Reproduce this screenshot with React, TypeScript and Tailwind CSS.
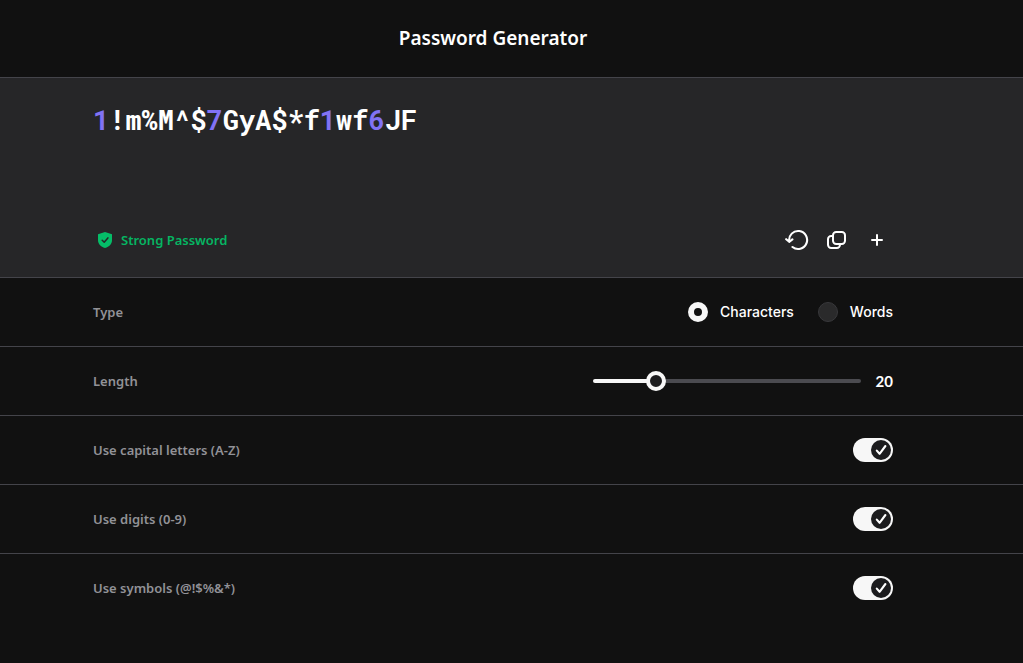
import React, { useState } from 'react';

const PASSWORD = '1!m%M^$7GyA$*f1wf6JF';
const MIN_LENGTH = 8;
const MAX_LENGTH = 64;

function Row({ children, last = false }: { children: React.ReactNode; last?: boolean }) {
  return (
    <div className={last ? '' : 'border-b border-[#44444a]'}>
      <div className="pl-[93px] pr-[130px]">
        <div className="mx-auto flex h-[68px] max-w-[800px] items-center justify-between">{children}</div>
      </div>
    </div>
  );
}

function Toggle({ id, label, last }: { id: string; label: string; last?: boolean }) {
  const [checked, setChecked] = useState(true);

  return (
    <Row last={last}>
      <label htmlFor={id}>{label}</label>
      <span className="relative flex">
        <input
          id={id}
          type="checkbox"
          role="switch"
          checked={checked}
          onChange={(e) => setChecked(e.target.checked)}
          className="peer h-6 w-10 cursor-pointer appearance-none rounded-full bg-[#44444a] checked:bg-[#f7f7f7]"
        />
        <svg
          viewBox="0 0 20 20"
          className="pointer-events-none absolute top-0.5 left-0.5 h-5 w-5 peer-checked:left-[18px]"
          aria-hidden="true"
        >
          <circle cx="10" cy="10" r="10" fill="#1c1c1e" />
          {checked && (
            <path d="M5.8 10.6l2.8 3.2L14.4 6" fill="none" stroke="#fff" strokeWidth="2.1" strokeLinecap="round" strokeLinejoin="round" />
          )}
        </svg>
      </span>
    </Row>
  );
}

export default function App() {
  const [type, setType] = useState('characters');
  const [length, setLength] = useState(20);

  const progress = (length - MIN_LENGTH) / (MAX_LENGTH - MIN_LENGTH);
  const radioClass =
    'h-5 w-5 cursor-pointer appearance-none rounded-full border border-[#38383b] bg-[#2a2a2b] checked:border-[6px] checked:border-[#f7f7f7] checked:bg-[#111111]';
  const iconButton = 'flex h-8 w-8 cursor-pointer items-center justify-center rounded-md hover:bg-white/10';

  return (
    <main className="min-h-screen bg-[#111111] font-['Noto_Sans',sans-serif] text-[13px] leading-5 font-semibold text-[#929297]">
      {/* Header */}
      <header className="border-b border-[#44444a] pl-[93px] pr-[130px]">
        <h1 className="flex h-[77px] items-center justify-center pb-0.5 text-[19px] leading-6 font-semibold text-white">
          Password Generator
        </h1>
      </header>

      {/* Generated password */}
      <section className="border-b border-[#44444a] bg-[#262628] pl-[93px] pr-[130px]">
        <div className="mx-auto flex min-h-[199px] max-w-[800px] flex-col justify-between pt-6 pb-[21px]">
          <output className="block font-['Roboto_Mono','DejaVu_Sans_Mono',monospace] text-[27px] leading-9 font-bold break-all text-white">
            {PASSWORD.split(/(\d)/).map((part, i) => (
              <span key={i} className={/\d/.test(part) ? 'text-[#8172f5]' : ''}>
                {part}
              </span>
            ))}
          </output>

          <div className="flex items-center justify-between">
            <p className="flex items-center gap-2 pl-1 text-[#05b562]">
              <svg viewBox="0 0 16 16" className="h-4 w-4" aria-hidden="true">
                <path d="M8 0 15 2.2V8c0 4-2.7 6.6-7 8-4.3-1.4-7-4-7-8V2.2Z" fill="#05bd68" />
                <path d="M5.2 8.3l2 2 3.7-4.4" fill="none" stroke="#262628" strokeWidth="1.5" strokeLinecap="round" strokeLinejoin="round" />
              </svg>
              Strong Password
            </p>

            <div className="flex gap-2 text-white">
              <button type="button" className={iconButton} aria-label="Generate again">
                <svg viewBox="0 0 24 24" className="h-6 w-6" fill="none" stroke="currentColor" strokeWidth="2.1" strokeLinecap="round" strokeLinejoin="round">
                  <path d="M4.2 13.2A9 9 0 1 1 7.5 19" />
                  <path d="M1.2 11.2l3 2.6 3.2-2.4" />
                </svg>
              </button>
              <button type="button" className={iconButton} aria-label="Copy password">
                <svg viewBox="0 0 24 24" className="h-6 w-6" fill="none" stroke="currentColor" strokeWidth="2" strokeLinecap="round" strokeLinejoin="round">
                  <rect x="8" y="4" width="12" height="12" rx="3.2" />
                  <path d="M8 8H6.2A3.2 3.2 0 0 0 3 11.2v5.6A3.2 3.2 0 0 0 6.200 20h5.600A3.200 3.200 0 0 0 15 16.800V16" />
                </svg>
              </button>
              <button type="button" className={iconButton} aria-label="Save password">
                <svg viewBox="0 0 24 24" className="h-6 w-6" fill="none" stroke="currentColor" strokeWidth="2" strokeLinecap="round">
                  <path d="M12 7v10M7 12h10" />
                </svg>
              </button>
            </div>
          </div>
        </div>
      </section>

      {/* Options */}
      <Row>
        <span id="type-label">Type</span>
        <div role="radiogroup" aria-labelledby="type-label" className="flex gap-6 font-['Inter',sans-serif] text-sm font-medium text-white">
          <label className="flex cursor-pointer items-center gap-3">
            <input type="radio" name="type" checked={type === 'characters'} onChange={() => setType('characters')} className={radioClass} />
            Characters
          </label>
          <label className="flex cursor-pointer items-center gap-3">
            <input type="radio" name="type" checked={type === 'words'} onChange={() => setType('words')} className={radioClass} />
            Words
          </label>
        </div>
      </Row>

      <Row>
        <label htmlFor="length">Length</label>
        <div className="flex items-center gap-3.5">
          <input
            id="length"
            type="range"
            min={MIN_LENGTH}
            max={MAX_LENGTH}
            value={length}
            onChange={(e) => setLength(Number(e.target.value))}
            className="h-1 w-[268px] cursor-pointer appearance-none rounded-full [&::-webkit-slider-thumb]:h-5 [&::-webkit-slider-thumb]:w-5 [&::-webkit-slider-thumb]:appearance-none [&::-webkit-slider-thumb]:rounded-full [&::-webkit-slider-thumb]:border-4 [&::-webkit-slider-thumb]:border-solid [&::-webkit-slider-thumb]:border-[#f7f7f7] [&::-webkit-slider-thumb]:bg-[#1c1c1e]"
            style={{ background: `linear-gradient(to right, #f7f7f7 ${progress * 100}%, #4b4b50 ${progress * 100}%)` }}
          />
          <output htmlFor="length" className="w-[18px] text-right font-['Lato',sans-serif] text-[15px] font-bold text-white">
            {length}
          </output>
        </div>
      </Row>

      <Toggle id="capitals" label="Use capital letters (A-Z)" />
      <Toggle id="digits" label="Use digits (0-9)" />
      <Toggle id="symbols" label="Use symbols (@!$%&*)" last />
    </main>
  );
}
